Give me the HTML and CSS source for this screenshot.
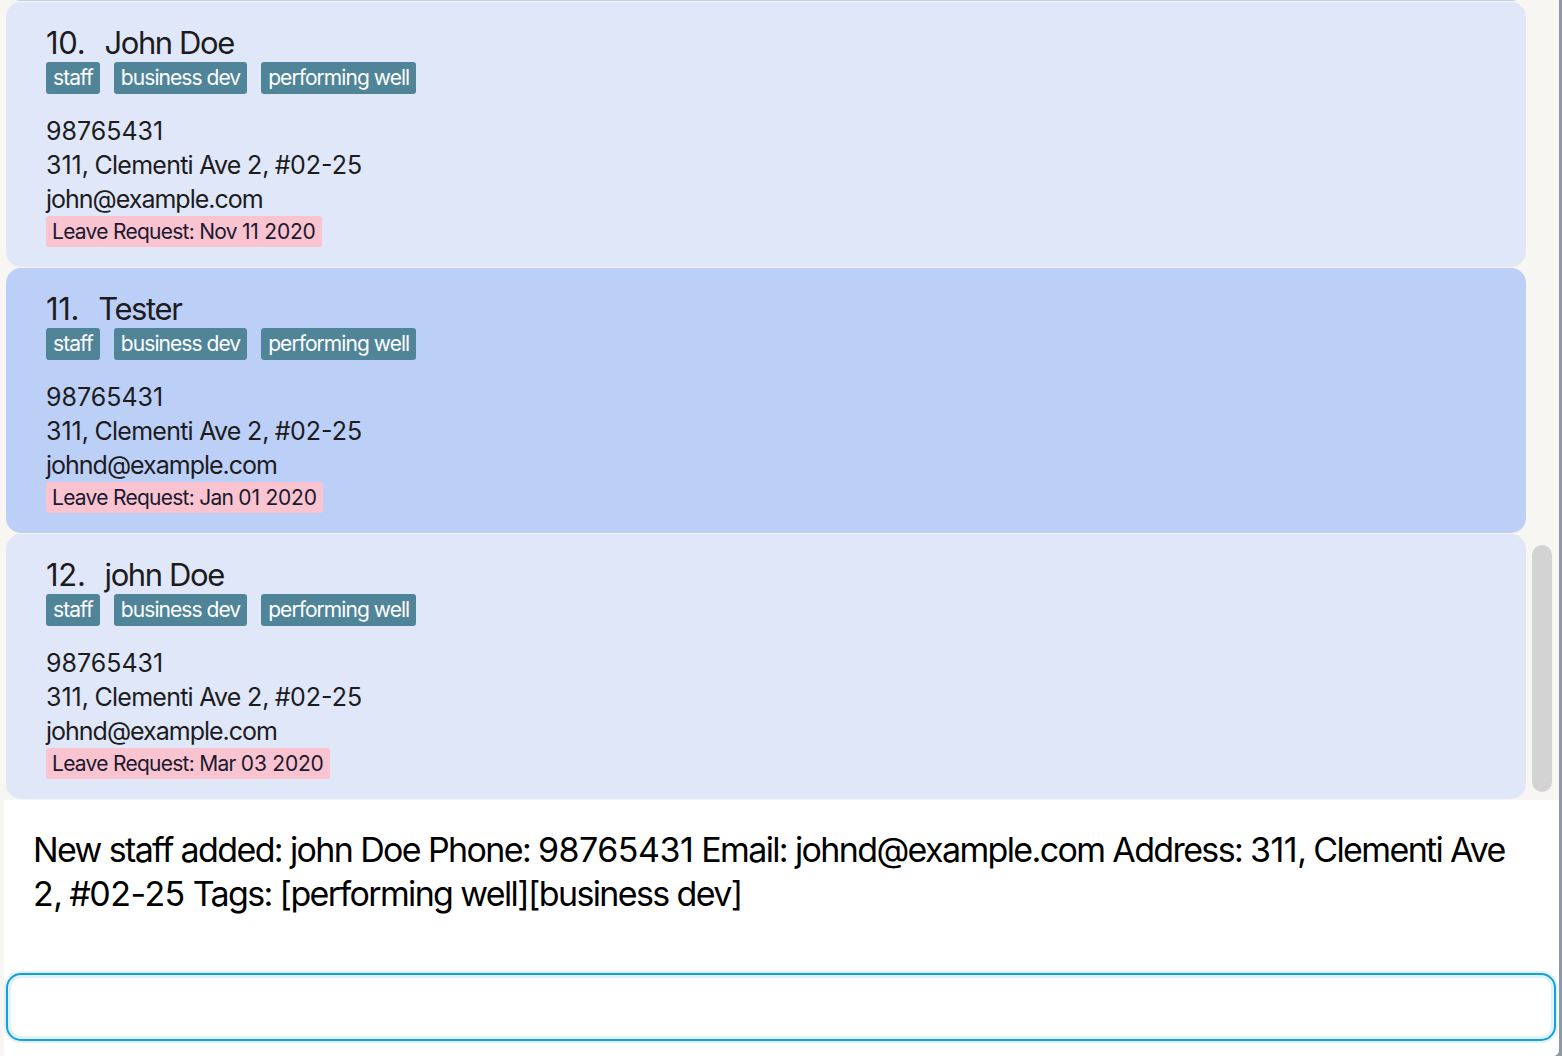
FILE: index.html
```html
<!DOCTYPE html>
<html>
<head>
<meta charset="utf-8">
<link rel="stylesheet" href="styles.css">
</head>
<body>
<div class="app">
  <div class="list">
    <div class="cards">
      <div class="card card-prev selected"></div>
      <div class="card">
        <div class="title"><span class="num">10.</span><span class="name">John Doe</span></div>
        <div class="tags"><span class="tag">staff</span><span class="tag">business dev</span><span class="tag">performing well</span></div>
        <div class="details">
          <div class="line"><span class="d">98765431</span></div>
          <div class="line addr"><span class="d">311</span>, Clementi Ave <span class="d">2</span>, #<span class="d">02-25</span></div>
          <div class="line">john@example.com</div>
        </div>
        <div class="leave">Leave Request: Nov <span class="d">11 2020</span></div>
      </div>
      <div class="card selected">
        <div class="title"><span class="num">11.</span><span class="name">Tester</span></div>
        <div class="tags"><span class="tag">staff</span><span class="tag">business dev</span><span class="tag">performing well</span></div>
        <div class="details">
          <div class="line"><span class="d">98765431</span></div>
          <div class="line addr"><span class="d">311</span>, Clementi Ave <span class="d">2</span>, #<span class="d">02-25</span></div>
          <div class="line">johnd@example.com</div>
        </div>
        <div class="leave">Leave Request: Jan <span class="d">01 2020</span></div>
      </div>
      <div class="card">
        <div class="title"><span class="num">12.</span><span class="name">john Doe</span></div>
        <div class="tags"><span class="tag">staff</span><span class="tag">business dev</span><span class="tag">performing well</span></div>
        <div class="details">
          <div class="line"><span class="d">98765431</span></div>
          <div class="line addr"><span class="d">311</span>, Clementi Ave <span class="d">2</span>, #<span class="d">02-25</span></div>
          <div class="line">johnd@example.com</div>
        </div>
        <div class="leave">Leave Request: Mar <span class="d">03 2020</span></div>
      </div>
    </div>
    <div class="scrolltrack"><div class="thumb"></div></div>
  </div>
  <div class="bottom">
    <div class="result">New staff added: john Doe Phone: <span class="d">98765431</span> Email: johnd@example.com Address: <span class="d">311</span>, Clementi Ave <span class="d">2</span>, #<span class="d">02-25</span> Tags: [performing well][business dev]</div>
    <div class="command"></div>
  </div>
</div>
</body>
</html>
```

FILE: styles.css
```css
* { box-sizing: border-box; }
html, body { margin: 0; padding: 0; }
body {
  width: 1562px;
  height: 1056px;
  overflow: hidden;
  background: #8d98a4;
  font-family: Inter, "Noto Sans", sans-serif;
}
.app {
  width: 1559px;
  height: 1056px;
  background: #f7f6f3;
  display: flex;
  flex-direction: column;
  border-bottom-right-radius: 6px;
  overflow: hidden;
}
.list {
  height: 800px;
  width: 1556px;
  display: flex;
  background: #f7f6f3;
  overflow: hidden;
  flex-shrink: 0;
}
.cards {
  width: 1526px;
  padding-left: 6px;
  display: flex;
  flex-direction: column;
  gap: 1px;
}
.card {
  height: 265px;
  flex-shrink: 0;
  background: #e0e7f9;
  border-radius: 15px;
  padding: 22px 40px 0 40px;
  color: #1c1c1e;
}
.card.selected { background: #bccff7; }
.card-prev { margin-top: -264px; }
.d { letter-spacing: -0.01em; }
.title {
  font-size: 31px;
  line-height: 38px;
  letter-spacing: -0.045em;
  white-space: nowrap;
}
.num { margin-right: 19px; letter-spacing: -0.01em; }
.tags {
  display: flex;
  gap: 14px;
  height: 32px;
}
.tag {
  background: #4f8499;
  color: #ffffff;
  font-size: 21px;
  line-height: 32px;
  padding: 0 7px;
  border-radius: 3px;
  letter-spacing: -0.045em;
}
.details {
  margin-top: 20px;
}
.line {
  font-size: 25px;
  line-height: 34px;
  letter-spacing: -0.04em;
}
.line.addr { letter-spacing: -0.03em; }
.line .d { letter-spacing: 0; }
.leave {
  display: inline-block;
  background: #f9c4d0;
  color: #1a1a30;
  font-size: 21px;
  line-height: 31px;
  padding: 0 6px;
  border-radius: 3px;
  letter-spacing: -0.035em;
}
.scrolltrack {
  width: 30px;
  padding: 545px 4px 0 6px;
}
.thumb {
  width: 20px;
  height: 247px;
  background: #d3d3d3;
  border-radius: 10px;
}
.bottom {
  flex: 1;
  margin-left: 4px;
  background: #ffffff;
  display: flex;
  flex-direction: column;
}
.result {
  padding: 28px 40px 0 29px;
  height: 173px;
  font-size: 34px;
  line-height: 44px;
  color: #000000;
  letter-spacing: -0.048em;
}
.result .d { letter-spacing: -0.015em; }
.command {
  margin-left: 2px;
  width: 1550px;
  height: 68px;
  border: 2px solid #14a0d8;
  border-radius: 15px;
  box-shadow: 0 0 0 2px #dff0fa, inset 0 0 0 3px #e2f2fb;
  background: #ffffff;
}
```
